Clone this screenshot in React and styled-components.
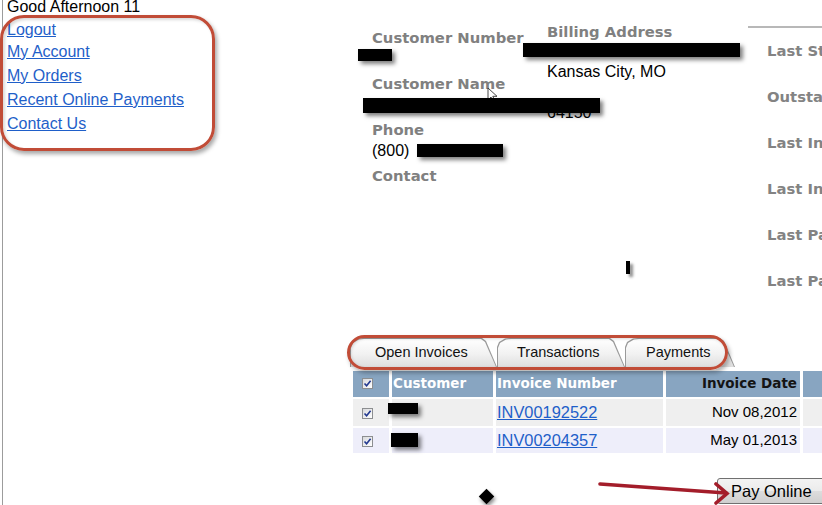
import React from 'react'
import styled, { createGlobalStyle } from 'styled-components'

const GlobalStyle = createGlobalStyle`
  html, body {
    margin: 0;
    padding: 0;
    background: #fff;
    overflow: hidden;
  }
  body {
    font-family: "Liberation Sans", Arial, sans-serif;
    color: #000;
  }
`

const stats = [
  'Last Statement',
  'Outstanding Balance',
  'Last Invoice Date',
  'Last Invoice Amount',
  'Last Payment Date',
  'Last Payment Amount',
]

const invoices = [
  { id: 'INV00192522', date: 'Nov 08,2012', bar: { dx: -4, dy: 4, w: 30, h: 11 }, h: 27 },
  { id: 'INV00204357', date: 'May 01,2013', bar: { dx: -1, dy: 5, w: 27, h: 14 }, h: 25, alt: true },
]

const Check = () => (
  <CheckBox>
    <svg width="9" height="9" viewBox="0 0 9 9">
      <path d="M1.5 4.5 L3.6 6.8 L7.6 1.8" fill="none" stroke="#22388f" strokeWidth="1.6" />
    </svg>
  </CheckBox>
)

const App = () => {
  return (
    <Page>
      <GlobalStyle />
      <Sidebar>
        <Greeting>Good Afternoon 11</Greeting>
        <LinkList>
          <NavLink href="#" $lh={20}>Logout</NavLink>
          <NavLink href="#">My Account</NavLink>
          <NavLink href="#">My Orders</NavLink>
          <NavLink href="#">Recent Online Payments</NavLink>
          <NavLink href="#">Contact Us</NavLink>
        </LinkList>
        <SideCallout />
      </Sidebar>

      <Main>
        <InfoGrid>
          <CustomerCol>
            <Field>
              <Label>Customer Number</Label>
              <Value><Redact $dx={-14} $dy={1} $w={34} $h={12} /></Value>
            </Field>
            <Field>
              <Label>Customer Name</Label>
              <Value><Redact $dx={-9} $dy={4} $w={237} $h={15} /></Value>
            </Field>
            <Field>
              <Label>Phone</Label>
              <Value>(800)<Redact $dx={8} $dy={4} $w={86} $h={13} /></Value>
            </Field>
            <Field>
              <Label>Contact</Label>
            </Field>
          </CustomerCol>

          <BillingCol>
            <Label>Billing Address</Label>
            <AddrLine><Redact $dx={-24} $dy={1} $w={217} $h={14} /></AddrLine>
            <AddrLine>Kansas City, MO</AddrLine>
            <AddrLine />
            <AddrLine>64150</AddrLine>
          </BillingCol>

          <StatsCol>
            {stats.map((s) => (
              <StatRow key={s}>
                <StatLabel>{s}</StatLabel>
              </StatRow>
            ))}
          </StatsCol>
        </InfoGrid>

        <TabBar>
          <Tab $w={147} $pl={25} $z={3}><span>Open Invoices</span></Tab>
          <Tab $w={128} $pl={20} $z={2}><span>Transactions</span></Tab>
          <Tab $w={110} $pl={21} $z={1}><span>Payments</span></Tab>
        </TabBar>
        <TabCallout />

        <InvoiceTable>
          <colgroup>
            <col style={{ width: 36 }} />
            <col style={{ width: 101 }} />
            <col style={{ width: 167 }} />
            <col style={{ width: 134 }} />
            <col style={{ width: 100 }} />
          </colgroup>
          <thead>
            <tr>
              <Th $pad="9px"><Check /></Th>
              <Th>Customer</Th>
              <Th>Invoice Number</Th>
              <Th $align="right" $dark>Invoice Date</Th>
              <Th />
            </tr>
          </thead>
          <tbody>
            {invoices.map((inv) => (
              <tr key={inv.id}>
                <Td $alt={inv.alt} $h={inv.h} $pad="9px"><Check /></Td>
                <CustCell $alt={inv.alt} $h={inv.h}>
                  <Redact $block $dx={inv.bar.dx} $dy={inv.bar.dy} $w={inv.bar.w} $h={inv.bar.h} />
                </CustCell>
                <Td $alt={inv.alt} $h={inv.h}><InvLink href="#">{inv.id}</InvLink></Td>
                <Td $alt={inv.alt} $h={inv.h} $align="right">{inv.date}</Td>
                <Td $alt={inv.alt} $h={inv.h} />
              </tr>
            ))}
          </tbody>
        </InvoiceTable>

        <ButtonRow>
          <PayButton>Pay Online</PayButton>
        </ButtonRow>
      </Main>

      <Cursor width="11" height="16" viewBox="0 0 11 16">
        <path d="M1 1 L1 13 L4 10 L6.5 15 L8.2 14.2 L5.8 9.3 L10 9.3 Z" fill="#fff" stroke="#333" strokeWidth="0.9" />
      </Cursor>
      <IMark />
      <Diamond />
      <Arrow width="150" height="35" viewBox="590 470 150 35">
        <g stroke="#a31d2a" strokeWidth="3.6" strokeLinecap="round" fill="none">
          <path d="M600 484 L726 493" />
          <path d="M716 484 L727 493.5 L716 503" />
        </g>
      </Arrow>
    </Page>
  )
}

const Page = styled.div`
  position: relative;
  display: flex;
  width: 822px;
  height: 505px;
  overflow: hidden;
`

const Sidebar = styled.aside`
  position: relative;
  flex: none;
  box-sizing: border-box;
  width: 348px;
  height: 505px;
  margin-left: 2px;
  border-left: 1px solid #9c9c9c;
  padding-left: 4px;
`

const Greeting = styled.div`
  font-size: 16px;
  line-height: 18px;
  margin-top: -2px;
`

const LinkList = styled.nav`
  display: flex;
  flex-direction: column;
  align-items: flex-start;
  margin-top: 4px;
`

const NavLink = styled.a`
  font-size: 16px;
  line-height: ${(p) => p.$lh || 24}px;
  color: #1f5fc9;
  text-decoration: underline;
`

const SideCallout = styled.div`
  position: absolute;
  left: -3px;
  top: 15px;
  width: 215px;
  height: 136px;
  box-sizing: border-box;
  border: 3.5px solid #c14c37;
  border-radius: 24px;
  box-shadow: 2px 3px 4px rgba(0, 0, 0, 0.35), inset 2px 2px 3px rgba(0, 0, 0, 0.15);
  pointer-events: none;
`

const Main = styled.main`
  position: relative;
  flex: none;
  width: 560px;
  display: flex;
  flex-direction: column;

  & > * {
    flex-shrink: 0;
  }
`

const InfoGrid = styled.section`
  display: grid;
  grid-template-columns: 175px 201px 1fr;
  box-sizing: border-box;
  height: 338px;
  padding-left: 22px;
`

const CustomerCol = styled.div`
  padding-top: 26.5px;
`

const Field = styled.div`
  margin-bottom: 4px;
`

const Label = styled.div`
  font-family: "DejaVu Sans", Verdana, sans-serif;
  font-weight: bold;
  font-size: 14.8px;
  line-height: 21px;
  color: #808080;
  white-space: nowrap;
`

const Value = styled.div`
  font-size: 16px;
  line-height: 21px;
  height: 21px;
  white-space: nowrap;
`

const Redact = styled.span`
  display: ${(p) => (p.$block ? 'block' : 'inline-block')};
  vertical-align: top;
  position: relative;
  z-index: 2;
  width: ${(p) => p.$w}px;
  height: ${(p) => p.$h}px;
  margin-left: ${(p) => p.$dx}px;
  margin-top: ${(p) => p.$dy}px;
  background: #000;
  box-shadow: 3px 3px 4px rgba(0, 0, 0, 0.5);
`

const BillingCol = styled.div`
  padding-top: 20.5px;
`

const AddrLine = styled.div`
  font-size: 16px;
  line-height: 20.5px;
  height: 20.5px;
  white-space: nowrap;
`

const StatsCol = styled.div`
  margin-top: 26px;
  align-self: start;
  border-top: 2px solid #b8b8b8;
  padding: 12px 0 0 19px;
`

const StatRow = styled.div`
  height: 46px;
`

const StatLabel = styled(Label)`
  color: #838383;
`

const TabBar = styled.div`
  display: flex;
  height: 29px;
`

const Tab = styled.div`
  position: relative;
  z-index: ${(p) => p.$z};
  width: ${(p) => p.$w}px;
  height: 29px;
  padding-left: ${(p) => p.$pl}px;
  box-sizing: border-box;
  font-size: 14.5px;
  line-height: 29px;
  color: #111;

  &::before,
  &::after {
    content: '';
    position: absolute;
    clip-path: polygon(0 9px, 2px 4px, 8px 0.5px, 13px 0, calc(100% - 15px) 0, calc(100% - 11px) 3px, 100% 100%, 0 100%);
  }
  &::before {
    inset: 0;
    background: #9a9a9a;
  }
  &::after {
    inset: 1px 1px 0 1px;
    background: linear-gradient(#ffffff, #f1f1f1 55%, #dedede);
  }

  span {
    position: relative;
    z-index: 1;
  }
`

const TabCallout = styled.div`
  position: absolute;
  left: -3px;
  top: 335px;
  width: 381px;
  height: 35px;
  box-sizing: border-box;
  border: 3px solid #c14c37;
  border-radius: 18px;
  box-shadow: 2px 3px 4px rgba(0, 0, 0, 0.3), inset 1px 1px 3px rgba(0, 0, 0, 0.15);
  pointer-events: none;
  z-index: 5;
`

const InvoiceTable = styled.table`
  table-layout: fixed;
  border-collapse: separate;
  border-spacing: 3px 2px;
  width: 556px;
  margin-top: 2px;
`

const Th = styled.th`
  height: 26px;
  box-sizing: border-box;
  padding: 0 3px 3px ${(p) => p.$pad || '1px'};
  line-height: 18px;
  background: #88a5c1;
  color: ${(p) => (p.$dark ? '#141414' : '#fff')};
  font-family: "DejaVu Sans", Verdana, sans-serif;
  font-weight: bold;
  font-size: 13.5px;
  text-align: ${(p) => p.$align || 'left'};
  white-space: nowrap;
`

const Td = styled.td`
  box-sizing: border-box;
  height: ${(p) => p.$h}px;
  padding: 0 3px 1px ${(p) => p.$pad || '1px'};
  line-height: 18px;
  background: ${(p) => (p.$alt ? '#eeeefa' : '#efefef')};
  font-size: 15px;
  text-align: ${(p) => p.$align || 'left'};
  white-space: nowrap;
`

const CustCell = styled(Td)`
  vertical-align: top;
  padding-left: 0;
`

const InvLink = styled.a`
  font-size: 16.4px;
  line-height: 18px;
  color: #1f5fc9;
  text-decoration: underline;
`

const CheckBox = styled.span`
  display: inline-flex;
  align-items: center;
  justify-content: center;
  box-sizing: border-box;
  width: 11px;
  height: 11px;
  vertical-align: middle;
  border: 1px solid #8c8e90;
  background: linear-gradient(135deg, #d8d9dc, #ffffff);
`

const ButtonRow = styled.div`
  padding-left: 367px;
  margin-top: 23px;
`

const PayButton = styled.button`
  box-sizing: border-box;
  width: 122px;
  height: 26px;
  padding: 0 0 0 13px;
  text-align: left;
  font-family: "Liberation Sans", Arial, sans-serif;
  font-size: 16.5px;
  color: #000;
  border: 1px solid #707070;
  border-radius: 3px;
  background: linear-gradient(#f3f3f3, #ebebeb 50%, #dddddd 50%, #cfcfcf);
`

const Cursor = styled.svg`
  position: absolute;
  left: 487px;
  top: 87px;
`

const IMark = styled.div`
  position: absolute;
  left: 626px;
  top: 261px;
  width: 4px;
  height: 13px;
  background: #000;
  box-shadow: 3px 3px 3px rgba(0, 0, 0, 0.45);
`

const Diamond = styled.div`
  position: absolute;
  left: 481px;
  top: 491px;
  width: 11px;
  height: 11px;
  background: #000;
  transform: rotate(45deg);
  box-shadow: 3px 1px 4px rgba(0, 0, 0, 0.45);
`

const Arrow = styled.svg`
  position: absolute;
  left: 590px;
  top: 470px;
  z-index: 6;
`

export default App
